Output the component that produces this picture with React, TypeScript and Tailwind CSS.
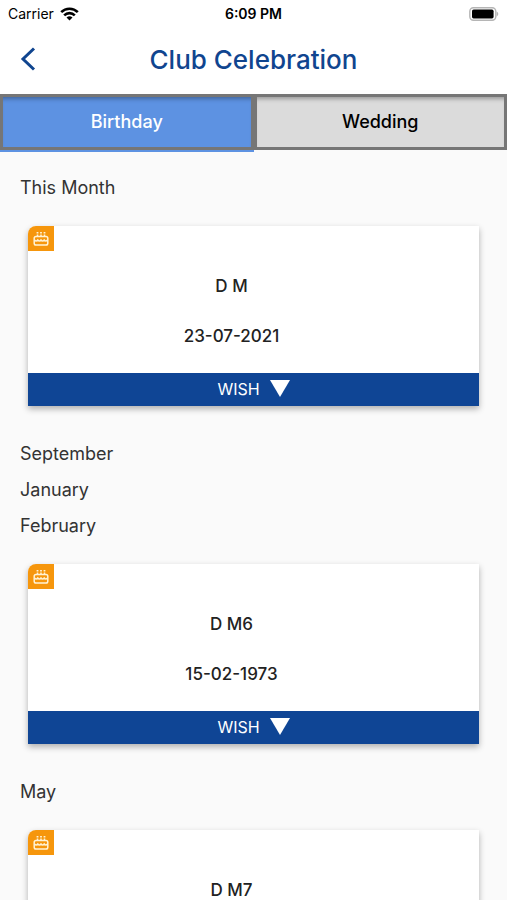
import { useState } from "react";

type Tab = "Birthday" | "Wedding";

type Member = { name: string; date?: string };

const BIRTHDAYS: { month: string; members: Member[] }[] = [
  { month: "This Month", members: [{ name: "D M", date: "23-07-2021" }] },
  { month: "September", members: [] },
  { month: "January", members: [] },
  { month: "February", members: [{ name: "D M6", date: "15-02-1973" }] },
  { month: "May", members: [{ name: "D M7" }] },
];

function StatusBar() {
  return (
    <div className="grid h-7 grid-cols-3 items-center px-2 font-[Inter,sans-serif] text-sm text-black">
      <div className="flex items-center gap-1.5">
        <span>Carrier</span>
        <svg width="19" height="14" viewBox="0 0 19 14" fill="none" stroke="#000" strokeWidth="2.6" aria-hidden="true">
          <path d="M1.2 5.2a11.8 11.8 0 0 1 16.6 0" />
          <path d="M4.2 8.3a7.5 7.5 0 0 1 10.6 0" />
          <path d="M9.5 13.6 6.5 10.6a4.3 4.3 0 0 1 6 0z" fill="#000" stroke="none" />
        </svg>
      </div>
      <span className="text-center font-semibold">6:09 PM</span>
      <svg className="justify-self-end" width="31" height="14" viewBox="0 0 31 14" aria-hidden="true">
        <rect x="1.8" y="0.8" width="26" height="12.4" rx="3.6" fill="#fff" stroke="#b5b5b5" strokeWidth="1.4" />
        <rect x="4" y="2.6" width="21.6" height="8.8" rx="1.6" fill="#000" />
        <path d="M28.6 4.6c2.2.8 2.2 4 0 4.8z" fill="#b5b5b5" />
      </svg>
    </div>
  );
}

function CakeIcon() {
  return (
    <svg width="16" height="16" viewBox="0 0 16 16" fill="none" stroke="#fff3d6" strokeWidth="1.5" aria-hidden="true">
      <rect x="1.2" y="5.4" width="13.6" height="8.6" rx="1.8" />
      <path d="M4.5 3.4v2M8 3.4v2M11.5 3.4v2" />
      <path d="M4.5 1v1.6M8 1v1.6M11.5 1v1.6" strokeWidth="1.8" />
      <path d="M1.5 9c1.1 1.4 2.2 1.4 3.3 0 1.1 1.4 2.1 1.4 3.2 0 1.1 1.4 2.1 1.4 3.2 0 1.1 1.4 2.2 1.4 3.3 0" />
    </svg>
  );
}

function MemberCard({ member }: { member: Member }) {
  return (
    <article className="mx-2 mt-5 mb-[30px] rounded-tl-lg bg-white shadow-[0_3px_6px_rgba(0,0,0,0.3)]">
      <div className="flex h-[147px]">
        <div className="flex h-[25px] w-[26px] shrink-0 items-center justify-center rounded-tl-lg bg-[#f6960c]">
          <CakeIcon />
        </div>
        <div className="flex flex-1 flex-col items-center gap-[26px] pt-12 pr-[70px] text-[17px] leading-6 font-medium text-[#222]">
          <h3>{member.name}</h3>
          {member.date && <p>{member.date}</p>}
        </div>
      </div>
      <button type="button" className="flex h-[33px] w-full items-center justify-center gap-2.5 bg-[#0f4595] pb-0.5 text-base text-white">
        WISH
        <svg width="20" height="17" viewBox="0 0 20 17" fill="#fff" aria-hidden="true">
          <path d="M0 0h20L10 17z" />
        </svg>
      </button>
    </article>
  );
}

function TabButton({ tab, active, onSelect }: { tab: Tab; active: boolean; onSelect: (t: Tab) => void }) {
  return (
    <button
      type="button"
      role="tab"
      aria-selected={active}
      onClick={() => onSelect(tab)}
      className={`border-b-2 ${active ? "border-[#5d92e2]" : "border-transparent"}`}
    >
      <span
        className={`flex h-14 items-center justify-center border-[3px] border-[#767676] text-lg font-medium shadow-[inset_0_5px_4px_-3px_rgba(0,0,0,0.3)] ${
          active ? "bg-[#5d92e2] text-white" : "bg-[#dbdbdb] text-black"
        }`}
      >
        {tab}
      </span>
    </button>
  );
}

export default function App() {
  const [tab, setTab] = useState<Tab>("Birthday");
  const groups = tab === "Birthday" ? BIRTHDAYS : [];

  return (
    <div className="flex h-screen flex-col bg-[#fafafa] font-[Inter,sans-serif]">
      <header className="bg-white">
        <StatusBar />
        <div className="grid h-[66px] grid-cols-[40px_1fr_40px] items-center px-2 pb-1">
          <button type="button" aria-label="Back" className="flex justify-center">
            <svg width="16" height="24" viewBox="0 0 16 24" fill="none" stroke="#10458f" strokeWidth="3" aria-hidden="true">
              <path d="M14 1.5 3 12l11 10.5" />
            </svg>
          </button>
          <h1 className="text-center text-[26px] font-medium text-[#10458f]">Club Celebration</h1>
        </div>
      </header>

      <div role="tablist" className="grid grid-cols-2">
        <TabButton tab="Birthday" active={tab === "Birthday"} onSelect={setTab} />
        <TabButton tab="Wedding" active={tab === "Wedding"} onSelect={setTab} />
      </div>

      <main className="flex-1 overflow-y-auto px-5 pt-[18px] [scrollbar-width:none]">
        {groups.map(({ month, members }) => (
          <section key={month}>
            <h2 className="text-lg leading-9 text-[#333]">{month}</h2>
            {members.map((m) => (
              <MemberCard key={m.name} member={m} />
            ))}
          </section>
        ))}
      </main>
    </div>
  );
}
